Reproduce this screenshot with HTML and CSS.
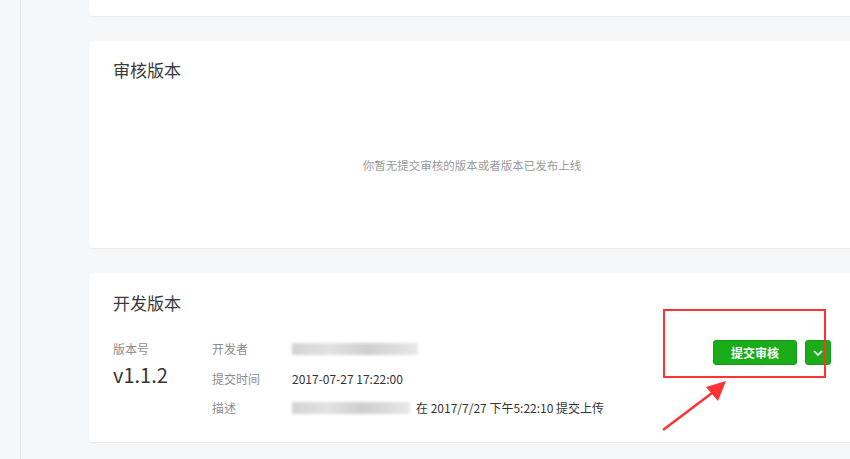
FILE: index.html
```html
<!DOCTYPE html>
<html lang="zh-CN">
  <head>
    <meta charset="UTF-8" />
    <title>版本管理</title>
    <link rel="stylesheet" href="styles.css">
  </head>
  <body>
    <div class="layout">
      <div class="sidebar"></div>
      <div class="main">
        <div class="card card-top"></div>

        <div class="card card-review">
          <h2 class="card-title">审核版本</h2>
          <p class="empty-tip">你暂无提交审核的版本或者版本已发布上线</p>
        </div>

        <div class="card card-dev">
          <h2 class="card-title">开发版本</h2>
          <div class="dev-body">
            <div class="version">
              <div class="version-label">版本号</div>
              <div class="version-num">v1.1.2</div>
            </div>
            <div class="info">
              <div class="info-row">
                <span class="info-label">开发者</span>
                <span class="info-value"><span class="blur blur-dev"></span></span>
              </div>
              <div class="info-row">
                <span class="info-label">提交时间</span>
                <span class="info-value">2017-07-27 17:22:00</span>
              </div>
              <div class="info-row">
                <span class="info-label">描述</span>
                <span class="info-value"><span class="blur blur-desc"></span>在 2017/7/27 下午5:22:10 提交上传</span>
              </div>
            </div>
            <div class="actions">
              <button class="btn-primary">提交审核</button>
              <button class="btn-drop">
                <svg width="10" height="6" viewBox="0 0 10 6"><path d="M1 1l4 4 4-4" fill="none" stroke="#fff" stroke-width="1.6"/></svg>
              </button>
              <div class="mark-box"></div>
            </div>
          </div>
        </div>
      </div>
    </div>

    <svg class="mark-arrow" width="80" height="60" viewBox="0 0 80 60">
      <line x1="3" y1="57" x2="56" y2="17" stroke="#f33" stroke-width="2.5"/>
      <polygon points="66,8 46,14 58,28" fill="#f33"/>
    </svg>
  </body>
</html>
```
FILE: styles.css
```css
* {
  margin: 0;
  padding: 0;
  box-sizing: border-box;
}

html, body {
  height: 100%;
  overflow: hidden;
}

body {
  font-family: "Noto Sans CJK SC", "Liberation Sans", sans-serif;
  background: #f6f7f9;
  color: #353535;
}

.layout {
  display: flex;
  height: 100%;
}

.sidebar {
  width: 21px;
  flex: none;
  border-right: 1px solid #e4e6ea;
}

.main {
  flex: 1;
  padding-left: 68px;
  margin-right: -5px;
  display: flex;
  flex-direction: column;
  gap: 25px;
}

.card {
  background: #fff;
  border-radius: 4px;
  box-shadow: 0 1px 2px rgba(0, 0, 0, 0.06);
  padding: 0 24px;
}

.card-top {
  height: 16px;
  border-radius: 0 0 4px 4px;
}

.card-title {
  font-size: 17px;
  font-weight: normal;
  line-height: 24px;
  color: #3a3a3a;
}

.card-review {
  height: 207px;
  padding-top: 17px;
}

.empty-tip {
  text-align: center;
  font-size: 11.5px;
  color: #9a9a9a;
  margin-top: 75px;
}

.card-dev {
  height: 169px;
  padding-top: 18px;
}

.dev-body {
  display: flex;
  margin-top: 24px;
}

.version {
  width: 99px;
}

.version-label {
  font-size: 12px;
  color: #8d8d8d;
  line-height: 20px;
}

.version-num {
  font-size: 20px;
  line-height: 26px;
  margin-top: 3px;
}

.info {
  flex: 1;
  display: flex;
  flex-direction: column;
  gap: 9.5px;
}

.info-row {
  display: flex;
  font-size: 12px;
  line-height: 20px;
}

.info-label {
  width: 80px;
  color: #8d8d8d;
}

.info-value {
  display: flex;
  align-items: center;
  color: #353535;
}

.blur {
  display: inline-block;
  height: 12px;
  background: linear-gradient(90deg, #d4d4d4, #e2e2e2 30%, #cfcfcf 60%, #e8e8e8);
  filter: blur(1.5px);
}

.blur-dev {
  width: 126px;
}

.blur-desc {
  width: 118px;
  margin-right: 6px;
}

.actions {
  position: relative;
  display: flex;
  gap: 8px;
  padding-top: 1px;
  align-self: flex-start;
}

.btn-primary {
  width: 84px;
  height: 25px;
  background: #1aad19;
  border: 1px solid #179b16;
  border-radius: 3px;
  color: #fff;
  font-family: inherit;
  font-size: 12px;
  font-weight: bold;
}

.btn-drop {
  width: 26px;
  height: 25px;
  background: #1aad19;
  border: 1px solid #179b16;
  border-radius: 3px;
  display: flex;
  align-items: center;
  justify-content: center;
}

.mark-box {
  position: absolute;
  left: -50px;
  top: -30px;
  width: 163px;
  height: 69px;
  border: 2px solid #f33;
}

.mark-arrow {
  position: absolute;
  left: 660px;
  top: 373px;
}
```
